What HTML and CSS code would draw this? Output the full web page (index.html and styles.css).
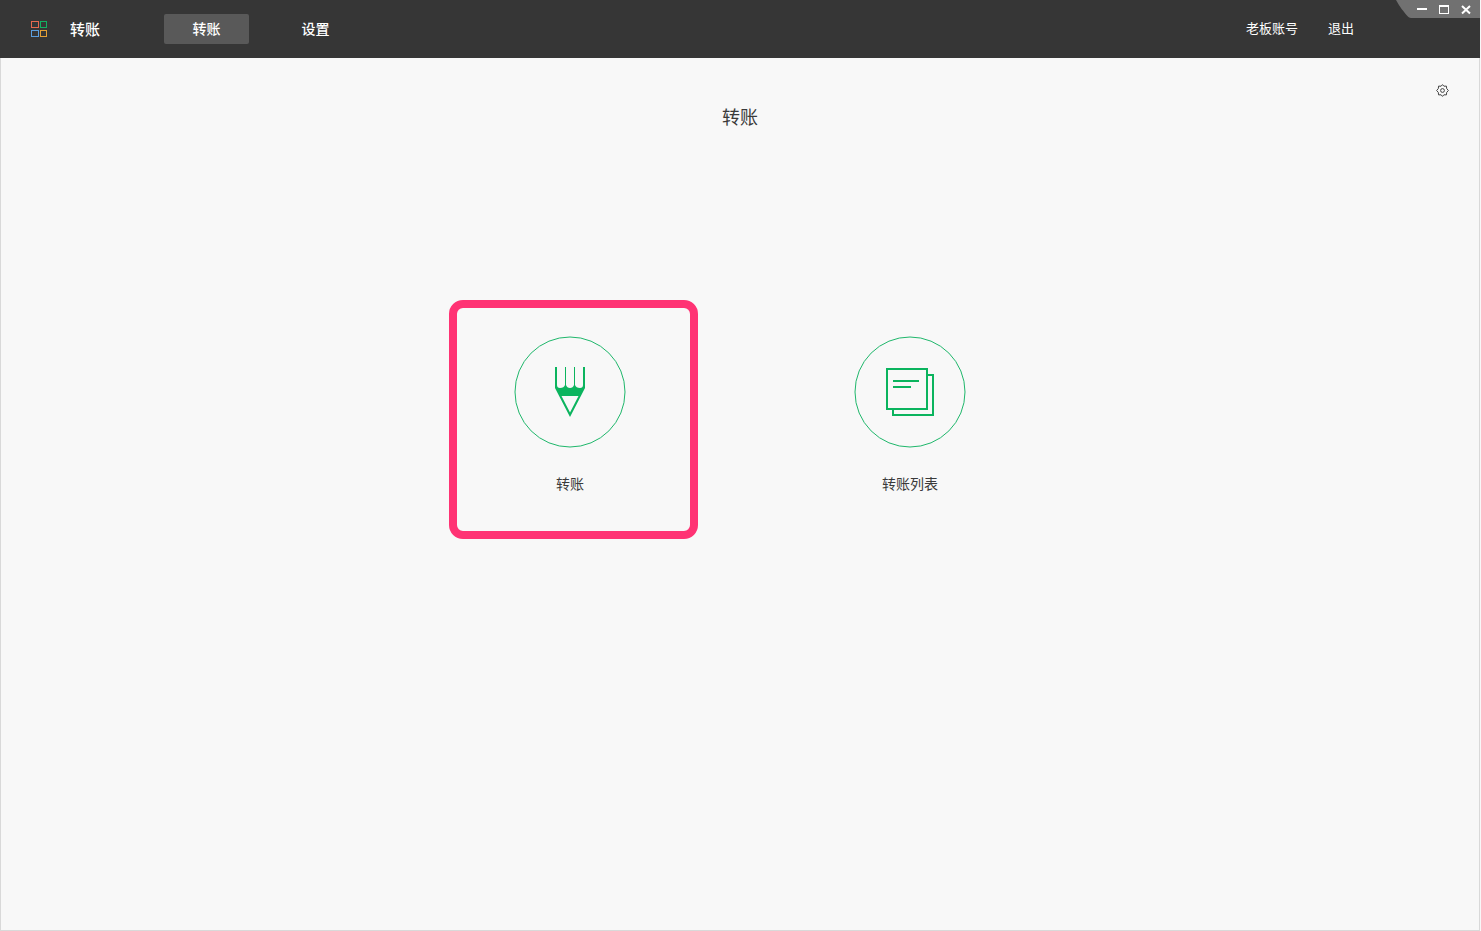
FILE: index.html
```
<!DOCTYPE html>
<html lang="zh-CN">

<head>
    <meta charset="UTF-8">
    <meta name="viewport" content="width=device-width, initial-scale=1.0">
    <title>转账</title>
    <link rel="stylesheet" href="styles.css">
</head>

<body>
    <header class="header">
        <svg class="logo" viewBox="0 0 17 17" fill="none">
            <rect x="0.5" y="0.5" width="7" height="6" stroke="#e8694f" />
            <rect x="9.5" y="0.5" width="6" height="6" stroke="#12b062" />
            <rect x="0.5" y="9.5" width="7" height="6" stroke="#5b9fe0" />
            <rect x="9.5" y="9.5" width="6" height="6" stroke="#e5a035" />
        </svg>
        <span class="brand">转账</span>

        <nav class="nav">
            <a class="nav-item active" href="#transfer">转账</a>
            <a class="nav-item" href="#settings">设置</a>
        </nav>

        <div class="account">
            <a href="#account">老板账号</a>
            <a href="#logout">退出</a>
        </div>

        <!-- window buttons -->
        <div class="window-controls">
            <svg class="window-shape" viewBox="0 0 84 18">
                <path d="M0 0H84V18H15C12 18 9 13 6 9.500Q3 5.500 0 0Z" fill="#717171" />
            </svg>
            <button type="button" aria-label="最小化">
                <svg viewBox="0 0 10 10"><path d="M0 3H10V5H0Z" fill="#fff" /></svg>
            </button>
            <button type="button" aria-label="最大化">
                <svg viewBox="0 0 10 10"><path d="M0 0H10V9H0ZM1 2V8H9V2Z" fill="#fff" fill-rule="evenodd" /></svg>
            </button>
            <button type="button" aria-label="关闭">
                <svg viewBox="0 0 10 10"><path d="M1 1L9 8.500M9 1L1 8.500" stroke="#fff" stroke-width="2" /></svg>
            </button>
        </div>
    </header>

    <main class="main">
        <div class="toolbar">
            <button type="button" class="gear" aria-label="设置">
                <svg viewBox="0 0 13 13" fill="none" stroke="#444" stroke-linejoin="round">
                    <path d="M6.500 .6L7.900 2.200L10.400 2.100L10.700 4.600L12.400 6.500L10.700 8.400L10.400 10.900L7.900 10.800L6.500 12.400L5.100 10.800L2.600 10.900L2.300 8.400L.6 6.500L2.300 4.600L2.600 2.100L5.100 2.200Z" />
                    <circle cx="6.500" cy="6.500" r="1.900" />
                </svg>
            </button>
        </div>

        <h1 class="title">转账</h1>

        <div class="cards">
            <a class="card selected" href="#transfer">
                <svg class="card-icon" viewBox="0 0 112 112" fill="none">
                    <circle cx="56" cy="56" r="55" stroke="#1fb76b" />
                    <path d="M41 31H43V49Q43 52 46 52Q50 52 51 49V31H52V49Q53 52 56 52Q59 52 60 49V31H61V49Q62 52 66 52Q69 52 69 49V31H71V52L56 81L41 52ZM47.500 60L56 76.500L64.500 60Z" fill="#0bb45e" fill-rule="evenodd" />
                </svg>
                <span class="card-label">转账</span>
            </a>
            <a class="card" href="#list">
                <svg class="card-icon" viewBox="0 0 112 112" fill="none">
                    <circle cx="56" cy="56" r="55" stroke="#1fb76b" />
                    <g stroke="#0bb45e" stroke-width="2">
                        <rect x="33" y="33" width="40" height="40" />
                        <path d="M73 39H79V79H39V73" />
                        <path d="M39 45H65M39 51H57" />
                    </g>
                </svg>
                <span class="card-label">转账列表</span>
            </a>
        </div>
    </main>
</body>

</html>
```
FILE: styles.css
```
* {
    box-sizing: border-box;
}

body {
    font-family: "Noto Sans CJK SC", "Noto Sans", sans-serif;
    font-size: 14px;
    color: #3a3a3a;
    background-color: #f8f8f8;
    margin: 0;
    padding-right: 1px;
    min-height: 100vh;
    display: flex;
    flex-direction: column;
}

a {
    color: inherit;
    text-decoration: none;
}

button {
    background: none;
    border: none;
    padding: 0;
    cursor: pointer;
}

svg {
    display: block;
}

.header {
    position: relative;
    display: flex;
    align-items: center;
    height: 58px;
    padding: 0 126px 0 31px;
    background-color: #363636;
    color: #fff;
    font-weight: 500;
}

.logo {
    width: 17px;
    height: 17px;
}

.brand {
    margin-left: 22px;
    padding-bottom: 2px;
    font-size: 15px;
}

.nav {
    display: flex;
    gap: 24px;
    margin-left: 64px;
}

.nav-item {
    width: 85px;
    padding-bottom: 2px;
    line-height: 28px;
    border-radius: 2px;
    text-align: center;
}

.nav-item.active {
    background-color: #595959;
}

.account {
    display: flex;
    gap: 30px;
    margin-left: auto;
    padding-bottom: 3px;
    font-size: 13px;
    font-weight: 400;
}

.window-controls {
    position: absolute;
    top: 0;
    right: 0;
    display: flex;
    justify-content: flex-end;
    align-items: center;
    gap: 12px;
    width: 84px;
    height: 18px;
    padding: 1px 9px 0 0;
}

.window-controls button {
    position: relative;
    width: 10px;
    height: 10px;
}

.window-shape {
    position: absolute;
    top: 0;
    left: 0;
    width: 84px;
    height: 18px;
}

.main {
    flex: 1;
    border: 1px solid #d9d9d9;
    border-top: none;
}

.toolbar {
    display: flex;
    justify-content: flex-end;
    padding: 26px 30px 0;
}

.gear {
    width: 13px;
    height: 13px;
}

.title {
    margin: 6px 0 0;
    font-size: 18px;
    font-weight: 400;
    line-height: 26px;
    text-align: center;
}

.cards {
    display: flex;
    justify-content: center;
    gap: 100px;
    margin-top: 171px;
}

.card {
    position: relative;
    display: flex;
    flex-direction: column;
    align-items: center;
    width: 240px;
    padding: 36px 0 46px;
}

/* frame around the chosen card */
.card.selected::after {
    content: "";
    position: absolute;
    top: 0;
    bottom: 0;
    left: -1px;
    right: -8px;
    border: 8px solid #ff3374;
    border-radius: 14px;
}

.card-icon {
    width: 112px;
    height: 112px;
}

.card-label {
    margin-top: 25px;
    line-height: 20px;
}
```
